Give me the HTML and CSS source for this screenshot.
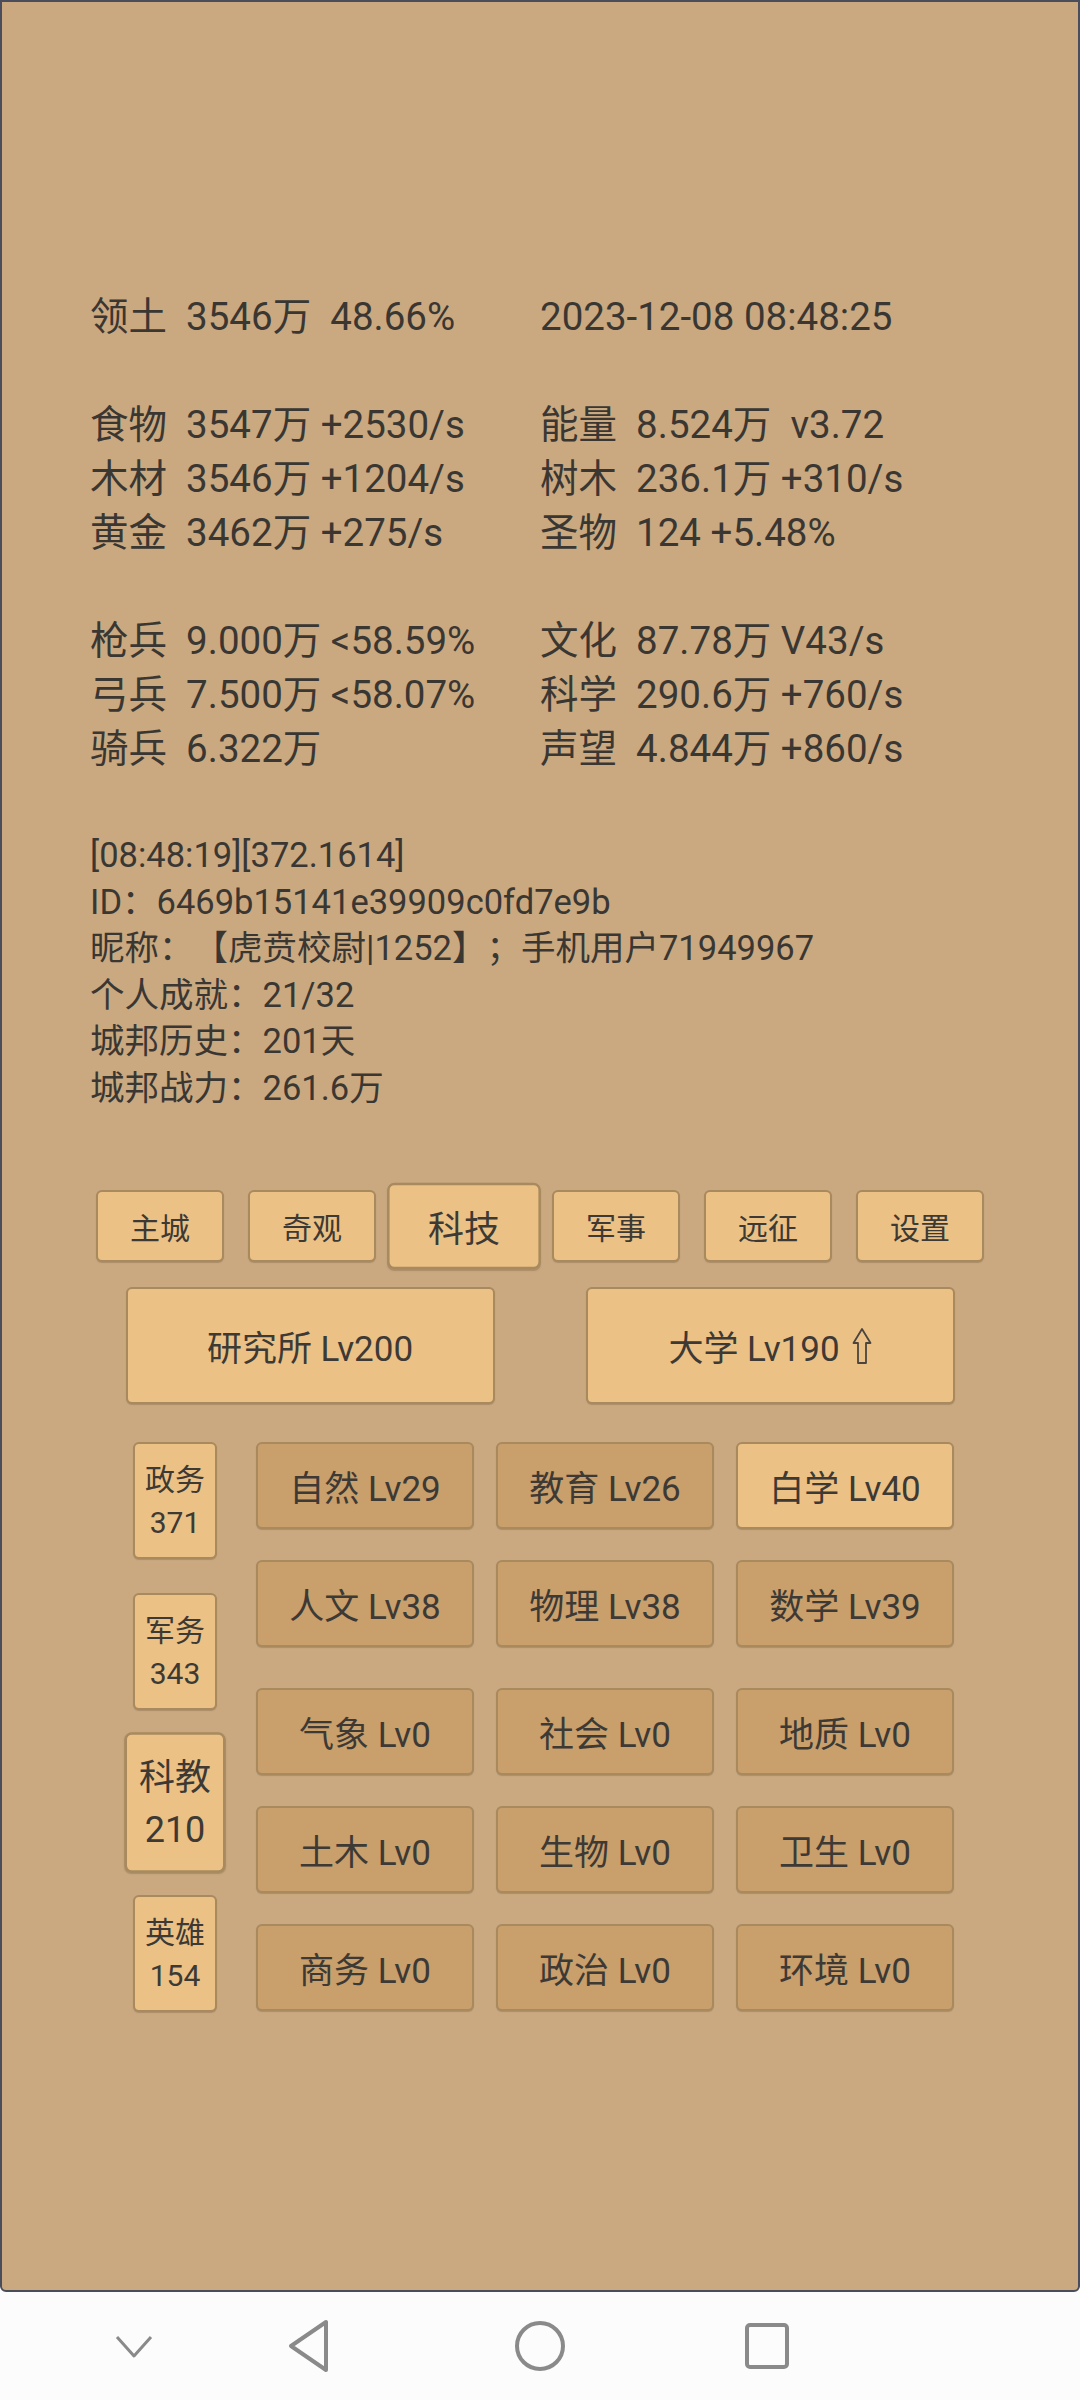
FILE: index.html
```html
<!DOCTYPE html>
<html lang="zh-CN">
<head>
  <meta charset="UTF-8">
  <title>科技</title>
  <link rel="stylesheet" href="styles.css">
</head>
<body>

  <div class="screen">

    <div class="stats">
      <div class="group">
        <div class="row"><span>领土  3546万  48.66%</span><span>2023-12-08 08:48:25</span></div>
      </div>
      <div class="group">
        <div class="row"><span>食物  3547万 +2530/s</span><span>能量  8.524万  v3.72</span></div>
        <div class="row"><span>木材  3546万 +1204/s</span><span>树木  236.1万 +310/s</span></div>
        <div class="row"><span>黄金  3462万 +275/s</span><span>圣物  124 +5.48%</span></div>
      </div>
      <div class="group">
        <div class="row"><span>枪兵  9.000万 &lt;58.59%</span><span>文化  87.78万 V43/s</span></div>
        <div class="row"><span>弓兵  7.500万 &lt;58.07%</span><span>科学  290.6万 +760/s</span></div>
        <div class="row"><span>骑兵  6.322万</span><span>声望  4.844万 +860/s</span></div>
      </div>
    </div>

    <div class="info">
      <div>[08:48:19][372.1614]</div>
      <div>ID：6469b15141e39909c0fd7e9b</div>
      <div>昵称：【虎贲校尉|1252】；手机用户71949967</div>
      <div>个人成就：21/32</div>
      <div>城邦历史：201天</div>
      <div>城邦战力：261.6万</div>
    </div>

    <div class="tabs">
      <div class="btn tab">主城</div>
      <div class="btn tab">奇观</div>
      <div class="btn tab active">科技</div>
      <div class="btn tab">军事</div>
      <div class="btn tab">远征</div>
      <div class="btn tab">设置</div>
    </div>

    <div class="buildings">
      <div class="btn building">研究所 Lv200</div>
      <div class="btn building">大学 Lv190
        <svg class="arrow" width="20" height="38" viewBox="0 0 20 38">
          <path d="M10 2 L18.5 16 L14 16 L14 36 L6 36 L6 16 L1.5 16 Z" fill="none" stroke="#4a453f" stroke-width="1.8" stroke-linejoin="round"/>
        </svg>
      </div>
    </div>

    <div class="lower">
      <div class="sidebar">
        <div class="btn side">政务<br>371</div>
        <div class="btn side">军务<br>343</div>
        <div class="btn side active">科教<br>210</div>
        <div class="btn side">英雄<br>154</div>
      </div>

      <div class="skills">
        <div class="skill-grid">
          <div class="btn skill dark">自然 Lv29</div>
          <div class="btn skill dark">教育 Lv26</div>
          <div class="btn skill">白学 Lv40</div>
          <div class="btn skill dark">人文 Lv38</div>
          <div class="btn skill dark">物理 Lv38</div>
          <div class="btn skill dark">数学 Lv39</div>
        </div>
        <div class="skill-grid">
          <div class="btn skill dark">气象 Lv0</div>
          <div class="btn skill dark">社会 Lv0</div>
          <div class="btn skill dark">地质 Lv0</div>
          <div class="btn skill dark">土木 Lv0</div>
          <div class="btn skill dark">生物 Lv0</div>
          <div class="btn skill dark">卫生 Lv0</div>
          <div class="btn skill dark">商务 Lv0</div>
          <div class="btn skill dark">政治 Lv0</div>
          <div class="btn skill dark">环境 Lv0</div>
        </div>
      </div>
    </div>

  </div>

  <div class="navbar">
    <svg class="nav-down" width="40" height="24" viewBox="0 0 40 24">
      <polyline points="2,3 19,22 36,3" fill="none" stroke="#8a8a8a" stroke-width="3" stroke-linejoin="round"/>
    </svg>
    <svg class="nav-back" width="44" height="54" viewBox="0 0 44 54">
      <path d="M5 27 L40 3 L40 51 Z" fill="none" stroke="#8a8a8a" stroke-width="4" stroke-linejoin="round"/>
    </svg>
    <svg class="nav-home" width="52" height="52" viewBox="0 0 52 52">
      <circle cx="26" cy="26" r="23" fill="none" stroke="#8a8a8a" stroke-width="4"/>
    </svg>
    <svg class="nav-recent" width="46" height="48" viewBox="0 0 46 48">
      <rect x="3" y="3" width="40" height="42" rx="3" fill="none" stroke="#8a8a8a" stroke-width="4"/>
    </svg>
  </div>

</body>
</html>
```

FILE: styles.css
```css
body {
  margin: 0;
  width: 1080px;
  font-family: Roboto, "Noto Sans CJK SC", "DejaVu Sans", sans-serif;
  color: #3a3733;
  background-color: #fcfcfc;
  text-spacing-trim: space-all;
}
.screen {
  box-sizing: border-box;
  height: 2292px;
  padding-top: 288px;
  border: 2px solid #4a4e5c;
  border-radius: 0 0 6px 6px;
  background-color: #caa981;
}
.stats {
  padding-left: 88px;
  font-size: 38.5px;
  line-height: 54px;
}
.group {
  margin-bottom: 54px;
}
.group:last-child {
  margin-bottom: 0;
}
.row {
  display: grid;
  grid-template-columns: 450px auto;
  white-space: pre;
}
.info {
  margin-top: 56px;
  padding-left: 88px;
  font-size: 34.5px;
  line-height: 46.5px;
  white-space: nowrap;
}

/* buttons */
.btn {
  box-sizing: border-box;
  display: flex;
  align-items: center;
  justify-content: center;
  text-align: center;
  border: 2px solid #a88a5e;
  border-radius: 6px;
  background-color: #ecc185;
  box-shadow: 0 1px 1px rgba(80, 60, 30, 0.25);
  color: #3d3934;
}
.tabs {
  display: flex;
  justify-content: center;
  gap: 24px;
  margin-top: 79px;
}
.tab {
  width: 128px;
  height: 72px;
  font-size: 30px;
}
.active {
  transform: scale(1.2);
}
.buildings {
  display: flex;
  justify-content: center;
  gap: 91px;
  margin-top: 25px;
}
.building {
  width: 369px;
  height: 117px;
  font-size: 35px;
}
.arrow {
  margin-left: 12px;
}
.lower {
  display: flex;
  gap: 39px;
  margin-top: 38px;
  padding-left: 131px;
}
.sidebar {
  display: flex;
  flex-direction: column;
  gap: 34px;
}
.side {
  width: 84px;
  height: 117px;
  font-size: 30px;
  line-height: 43px;
}
.skills {
  display: flex;
  flex-direction: column;
  gap: 41px;
}
.skill-grid {
  display: grid;
  grid-template-columns: repeat(3, 218px);
  grid-auto-rows: 87px;
  gap: 31px 22px;
}
.skill {
  font-size: 35px;
}
.skill.dark {
  background-color: #c99f6c;
}

/* system navigation */
.navbar {
  display: flex;
  align-items: center;
  height: 108px;
  padding-left: 115px;
}
.nav-back {
  margin-left: 131px;
}
.nav-home {
  margin-left: 184px;
}
.nav-recent {
  margin-left: 178px;
}
```
